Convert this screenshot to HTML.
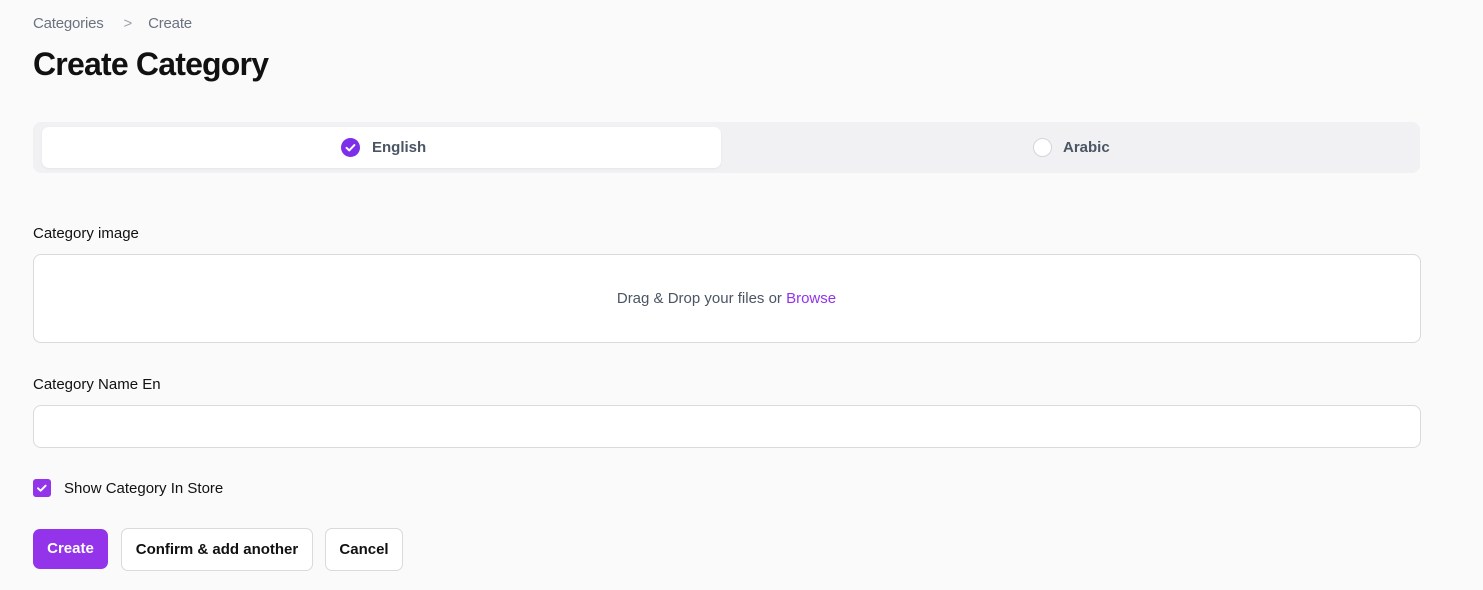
<!DOCTYPE html>
<html><head><style>
body{margin:0;background:#fafafa;font-family:"Liberation Sans",sans-serif;color:#111;width:1483px;height:590px;overflow:hidden;position:relative}
.a{position:absolute}
</style></head><body>
<div class="a" style="left:33px;top:15px;font-size:15px;color:#6b7280;letter-spacing:-0.2px">Categories<span style="margin:0 16px 0 20px;color:#9ca3af">&gt;</span>Create</div>
<div class="a" style="left:33px;top:46px;font-size:32px;font-weight:bold;letter-spacing:-0.8px">Create Category</div>
<div class="a" style="left:33px;top:122px;width:1387px;height:51px;background:#f1f1f3;border-radius:8px"></div>
<div class="a" style="left:42px;top:127px;width:679px;height:41px;background:#fff;border-radius:7px;box-shadow:0 1px 2px rgba(0,0,0,.05)"></div>
<svg class="a" style="left:341px;top:138px" width="19" height="19"><circle cx="9.5" cy="9.5" r="9.5" fill="#7c2ee8"/><path d="M5.5 9.8l2.7 2.6 5.2-5.3" stroke="#fff" stroke-width="2" fill="none" stroke-linecap="round" stroke-linejoin="round"/></svg>
<div class="a" style="left:372px;top:139px;font-size:15px;font-weight:bold;color:#4b5563">English</div>
<div class="a" style="left:1033px;top:138px;width:17px;height:17px;border:1px solid #d1d5db;border-radius:50%;background:#fff"></div>
<div class="a" style="left:1063px;top:139px;font-size:15px;font-weight:bold;color:#4b5563">Arabic</div>
<div class="a" style="left:33px;top:225px;font-size:15px">Category image</div>
<div class="a" style="left:33px;top:254px;width:1386px;height:87px;background:#fff;border:1px solid #d9d9de;border-radius:8px"></div>
<div class="a" style="left:0;width:1453px;text-align:center;top:290px;font-size:15px;color:#4b5563">Drag &amp; Drop your files or <span style="color:#9333ea">Browse</span></div>
<div class="a" style="left:33px;top:376px;font-size:15px">Category Name En</div>
<div class="a" style="left:33px;top:405px;width:1386px;height:41px;background:#fff;border:1px solid #d9d9de;border-radius:8px"></div>
<svg class="a" style="left:33px;top:479px" width="18" height="18"><rect width="18" height="18" rx="3" fill="#9333ea"/><path d="M5 9.3l2.6 2.4 5-5" stroke="#fff" stroke-width="2" fill="none" stroke-linecap="round" stroke-linejoin="round"/></svg>
<div class="a" style="left:64px;top:480px;font-size:15px">Show Category In Store</div>
<div class="a" style="left:33px;top:529px;width:75px;height:40px;background:#9333ea;border-radius:7px;color:#fff;font-weight:bold;font-size:15px;line-height:40px;text-align:center">Create</div>
<div class="a" style="left:121px;top:528px;width:190px;height:41px;background:#fff;border:1px solid #d9d9de;border-radius:7px;font-weight:bold;font-size:15px;line-height:41px;text-align:center">Confirm &amp; add another</div>
<div class="a" style="left:325px;top:528px;width:76px;height:41px;background:#fff;border:1px solid #d9d9de;border-radius:7px;font-weight:bold;font-size:15px;line-height:41px;text-align:center">Cancel</div>
</body></html>
